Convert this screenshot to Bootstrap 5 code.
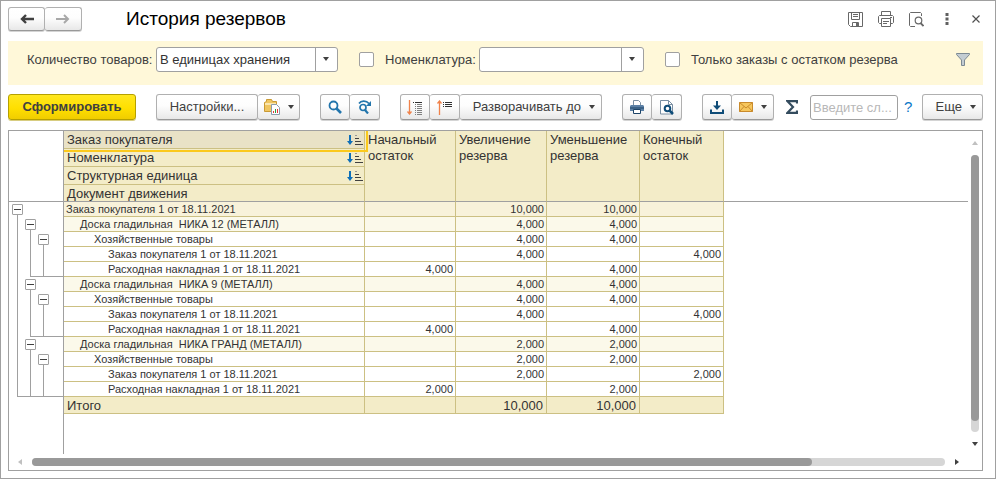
<!DOCTYPE html>
<html lang="ru">
<head>
<meta charset="utf-8">
<meta name="viewport" content="width=device-width, initial-scale=1">
<title>История резервов</title>
<link href="https://cdn.jsdelivr.net/npm/bootstrap@5.3.0/dist/css/bootstrap.min.css" rel="stylesheet">
<style>
body{font-family:"Liberation Sans",Arial,sans-serif;font-size:13px;line-height:16px;color:#404040;background:#fff}
.app-window{height:100vh;min-height:440px;border:1px solid #a0a0a0;padding:6px 12px 7px 7px}
svg{display:block;flex:none}
.page-title{font-size:19px;line-height:24px;color:#000;font-weight:400;margin-left:44px}
.win-tools{gap:15px;padding-right:3px}
.dots-btn{margin-left:6px}
.close-btn{margin-left:8px}
.tool{display:inline-flex;align-items:center;justify-content:center;height:26px;min-width:30px;padding:0 6px;border:1px solid #b0b0b0;border-bottom-color:#999;border-radius:3px;background:linear-gradient(#fff,#fdfdfd 45%,#e8e8e8);box-shadow:0 1px 0 #d4d4d4;color:#404040;font-size:13px;line-height:16px;flex:none}
.btn-group>.tool{flex:none}
.btn-group>.tool:not(:first-child){margin-left:0;border-left:0}
.nav-tool{height:24px;width:37px}
.tool-menu{width:42px}
.tool-main{width:128px;font-weight:700;background:linear-gradient(#ffe71f,#ffdf00 55%,#f0cd00);border-color:#b5a000;box-shadow:0 1px 0 #d8cd80}
.set-btn{width:102px}
.expand-btn{width:142px;justify-content:flex-end}
.more-btn{width:61px;justify-content:flex-end}
.caret{width:0;height:0;border:3px solid transparent;border-top:4px solid #404040;border-bottom:0}
.bare{border:0;background:none;padding:0;color:#404040}
.filter-bar{background:#fff8d9;height:44px;margin-top:10px;padding:6px 13px 13px 19px}
.lb-unit{width:129px}
.lb-item{width:94px}
.combo{height:25px;border:1px solid #a0a0a0;border-radius:3px;color:#333;padding:0 26px 0 3px;appearance:none;font-size:13px;background:url("data:image/svg+xml,%3Csvg xmlns='http://www.w3.org/2000/svg' width='22' height='23'%3E%3Cpath d='M.5 0v23' stroke='%23a0a0a0'/%3E%3Cpath d='M8 9h6l-3 4z' fill='%23404040'/%3E%3C/svg%3E") right center no-repeat #fff}
.combo-unit{width:182px}
.combo-item{width:165px}
.tick{appearance:none;width:15px;height:15px;border:1px solid #a0a0a0;border-radius:2px;background:#fff;margin:0 11px 0 21px}
.tick:checked{background:#777}
.toolbar{margin-top:9px;height:27px}
.toolbar>.tool-main,.toolbar>.btn-group{margin-right:20px}
.toolbar>.btn-group.send-group,.sum-btn{margin-right:12px}
.sum-btn,.help{height:26px;line-height:26px}
.search-text{height:25px;border:1px solid #a0a0a0;border-radius:3px;padding:0 2px;font-size:13px;min-width:0;width:60px;margin-top:1px}
.search-text::placeholder{color:#b8b8b8;opacity:1}
.help{color:#0b78c8;font-size:15px;text-decoration:none;width:24px;padding-left:6px}
.report{border:1px solid #a0a0a0;margin-top:9px;min-height:0}
.sheet{overflow:hidden;min-width:0}
.grid{width:100%;height:100%;table-layout:fixed;border-collapse:separate;border-spacing:0;color:#333}
.c-gut{width:55px}
.c-name{width:301px}
.c-a{width:91px}
.c-b{width:93px}
.c-c{width:84px}
.grid th{font-weight:400;background:#f3ecc8;border:0 solid #ccc083;border-width:0 1px 1px 0;padding:1px 1px 0 3px;vertical-align:top;height:18px;line-height:16px}
.grid th.last-row,.grid th[rowspan]{border-bottom-color:#a0a0a0}
.grid th.last-row{height:17px;line-height:15px}
.grid th.none{background:#fff;border-right-color:#a0a0a0}
.grid th.none:last-child{border-right:0}
.grid th.current{background:#e9e2c6;position:relative}
.current::after{content:"";position:absolute;left:0;top:0;right:-4px;bottom:-4px;border:solid #fbc91c;border-width:0 2px 2px 0}
.sort{margin-top:3px}
.grid td{border:0 solid #ccc083;border-width:0 1px 1px 0;height:15px;padding:0 2px;font-size:11px;line-height:14px;text-align:right;white-space:pre;overflow:hidden}
.grid td:last-child,.grid .rest td{border-width:0}
.grid td.gut,.grid .rest td.gut{border-width:0 1px 0 0;border-color:#a0a0a0;padding:0 0 0 8px;background:#fff!important}
.grid td:nth-child(2){text-align:left}
.lv0 td:not(:last-child){background:#f8f2da}
.lv1 td:not(:last-child){background:#fbf9ea}
.lv1 td:nth-child(2){padding-left:16px}
.lv2 td:nth-child(2){padding-left:30px}
.lv3 td:nth-child(2){padding-left:44px}
.grid .total td{background:#f3ecc8;height:17px;font-size:13px;line-height:15px;padding:1px 3px 0}
.grid .total td:last-child{background:none}
.grid .rest td{height:auto}
.tree{display:flex;height:15px}
.tree i{width:13px;border:0 solid #a0a0a0}
.tree i:last-child{flex:1}
.tree .ln{border-left-width:1px}
.tree .end{border-bottom-width:1px}
.tree .nd{background:linear-gradient(#a0a0a0,#a0a0a0) 0 100%/1px 50% no-repeat}
.fold{display:block;width:11px;height:11px;margin:2px 0 0 -5px;padding:0;border:1px solid #a0a0a0;border-radius:1px;background:linear-gradient(#404040,#404040) center/7px 1px no-repeat #fff}
.vbar{width:14px;padding:10px 3px 8px;gap:10px}
.hbar{height:16px;padding:0 23px 0 9px;gap:10px}
.track{background:#d6d6d6;border-radius:4px}
.thumb{background:#999;border-radius:4px}
.vbar .track,.vbar .thumb{width:8px}
.vbar .thumb{height:96%}
.hbar .track,.hbar .thumb{height:8px}
.hbar .thumb{width:85.4%}
</style>
<script src="https://cdn.jsdelivr.net/npm/bootstrap@5.3.0/dist/js/bootstrap.bundle.min.js"></script>
</head>
<body>
<main class="app-window d-flex flex-column">
  <header class="d-flex align-items-center">
    <div class="btn-group" role="group" aria-label="Навигация">
      <button class="tool nav-tool" type="button" aria-label="Назад"><svg width="14" height="10"><path d="M14 5H3M6 1L2 5l4 4" fill="none" stroke="#404040" stroke-width="2.4"/></svg></button>
      <button class="tool nav-tool" type="button" aria-label="Вперед"><svg width="14" height="10"><path d="M0 5h11M8 1l4 4-4 4" fill="none" stroke="#a8a8a8" stroke-width="2"/></svg></button>
    </div>
    <h1 class="page-title mb-0 me-auto">История резервов</h1>
    <div class="d-flex align-items-center win-tools">
      <button class="bare" type="button" aria-label="Сохранить"><svg width="15" height="15" fill="none" stroke="#686868"><path d="M.5.5h14v14H2.5l-2-2zM3.500.5v7h8v-7M5 2.500h5M5 4.500h5M4.500 14.500v-4h6v4"/><path d="M8 11h2v3H8z" fill="#686868" stroke="none"/></svg></button>
      <button class="bare" type="button" aria-label="Печать"><svg width="16" height="16" fill="none" stroke="#686868"><path d="M3.500 4V.5h9V4M3.500 12.500h-2l-1-1v-6l1-1h13l1 1v6l-1 1h-2M3.500 7.500h9v8h-9zM5 10.500h6M5 12.500h4M12 6.500h2"/></svg></button>
      <button class="bare" type="button" aria-label="Просмотр"><svg width="15" height="15" fill="none" stroke="#686868"><path d="M12.500 4V1.500l-1-1H1.500l-1 1v12l1 1H6"/><circle cx="9.500" cy="8.500" r="3.300" stroke-width="1.200"/><path d="M11.500 11l3 3" stroke-width="1.800"/></svg></button>
      <button class="bare dots-btn" type="button" aria-label="Ещё"><svg width="4" height="12" fill="#606060"><path d="M.5 0h3v3h-3zM.5 4.500h3v3h-3zM.5 9h3v3h-3z"/></svg></button>
      <button class="bare close-btn" type="button" aria-label="Закрыть"><svg width="8" height="8"><path d="M.5.5l7 7M7.500.5l-7 7" stroke="#505050" stroke-width="1.200"/></svg></button>
    </div>
  </header>

  <section class="filter-bar d-flex align-items-center">
    <label for="unit" class="lb-unit">Количество товаров:</label>
    <select id="unit" class="combo combo-unit"><option>В единицах хранения</option></select>
    <input id="useItem" type="checkbox" class="tick">
    <label for="useItem" class="lb-item">Номенклатура:</label>
    <select id="item" class="combo combo-item" aria-label="Номенклатура"><option></option></select>
    <input id="onlyRest" type="checkbox" class="tick">
    <label for="onlyRest">Только заказы с остатком резерва</label>
    <button class="bare ms-auto" type="button" aria-label="Фильтр"><svg width="14" height="13"><path d="M.5.5h13v1L8.500 7v5.500h-3V7L.5 1.500z" fill="#c3ccd2" stroke="#7d8a93"/></svg></button>
  </section>

  <div class="toolbar d-flex align-items-start" role="toolbar" aria-label="Команды отчета">
    <button class="tool tool-main" type="button">Сформировать</button>
    <div class="btn-group">
      <button class="tool set-btn" type="button">Настройки...</button>
      <button class="tool tool-menu gap-2" type="button" aria-label="Варианты настроек"><svg width="16" height="16"><path d="M.5 12.500v-9l2-1V.5h5l1 2h4v10z" fill="#f0c661" stroke="#c99a35"/><path d="M1 5h11" stroke="#fae6ae" stroke-width="2"/><path d="M7.500 5.500h5l3 3v7h-8z" fill="#fff" stroke="#8a9cac"/><path d="M9.500 14v-2M13.500 14v-4" stroke="#e33"/><path d="M11.500 14v-4" stroke="#2a9c3c"/></svg><span class="caret"></span></button>
    </div>
    <div class="btn-group">
      <button class="tool" type="button" aria-label="Найти"><svg width="14" height="14" fill="none" stroke="#2275ac"><circle cx="5.500" cy="5.500" r="4" stroke-width="1.800"/><path d="M8.500 8.500l4.500 4.500" stroke-width="2.600"/></svg></button>
      <button class="tool" type="button" aria-label="Найти далее"><svg width="14" height="14" fill="none" stroke="#2275ac"><circle cx="5" cy="7.500" r="3" stroke-width="1.700"/><path d="M7 10l3 3.500" stroke-width="2.200"/><path d="M1 3.500C3 .5 8 0 11 3.500" stroke-width="1.700"/><path d="M13 1v5H8z" fill="#2275ac" stroke="none"/></svg></button>
    </div>
    <div class="btn-group">
      <button class="tool" type="button" aria-label="Развернуть"><svg width="16" height="15"><path d="M2.500 0v14M.5 11.500l2 2.500 2-2.500" fill="none" stroke="#f0824a" stroke-width="1.300"/><path d="M6 2.500h9" stroke="#303030" stroke-dasharray="1 1 14"/><path d="M8 4.500h7M8 6.500h7M8 8.500h7M8 10.500h7M8 12.500h7M8 14.500h7" stroke="#808080" stroke-dasharray="1 1 14"/></svg></button>
      <button class="tool" type="button" aria-label="Свернуть"><svg width="16" height="15"><path d="M2.500 15V1M.5 3.500L2.500 1l2 2.500" fill="none" stroke="#f0824a" stroke-width="1.300"/><path d="M6 2.500h9M6 4.500h9M6 6.500h9" stroke="#303030" stroke-dasharray="1 1 14"/></svg></button>
      <button class="tool expand-btn gap-2" type="button">Разворачивать до<span class="caret"></span></button>
    </div>
    <div class="btn-group">
      <button class="tool" type="button" aria-label="Печать"><svg width="14" height="14"><path d="M3.500 6V.5h5l2 2V6" fill="#fff" stroke="#7a8fa3"/><path d="M1 5h12l1 1v5H0V6z" fill="#5b80a6"/><path d="M0 8h14" stroke="#1d4468"/><path d="M3.500 9.500h7v4h-7z" fill="#fff" stroke="#1d4468"/></svg></button>
      <button class="tool" type="button" aria-label="Просмотр"><svg width="14" height="15"><path d="M.5.5h8l4 4v9.500H.5z" fill="#fff" stroke="#7a8fa3"/><path d="M8.500.5v4h4" fill="none" stroke="#7a8fa3"/><circle cx="7.500" cy="8.500" r="2.800" fill="#fff" stroke="#0f4c78" stroke-width="2"/><path d="M9.500 10.500l3.500 3.500" stroke="#0f4c78" stroke-width="2.500"/></svg></button>
    </div>
    <div class="btn-group send-group">
      <button class="tool" type="button" aria-label="Сохранить"><svg width="14" height="13"><path d="M7 0v7" stroke="#0f4c78" stroke-width="2"/><path d="M3 4.500h8L7 9z" fill="#0f4c78"/><path d="M1 8.500V12h12V8.500" fill="none" stroke="#0f4c78" stroke-width="2"/></svg></button>
      <button class="tool tool-menu gap-2" type="button" aria-label="Отправить"><svg width="14" height="10"><path d="M.5.5h13v9H.5z" fill="#f6c65c" stroke="#c98a2b"/><path d="M.5.5L7 6 13.500.5M.5 9.500l4.500-5M13.500 9.500L9 4.500" fill="none" stroke="#c98a2b"/></svg><span class="caret"></span></button>
    </div>
    <button class="bare sum-btn d-flex align-items-center" type="button" aria-label="Сумма"><svg width="12" height="14"><path d="M11 3.500V1.200H1.500L7 7l-5.500 5.800H11V10.500" fill="none" stroke="#344c5e" stroke-width="2.200"/></svg></button>
    <input class="search-text flex-grow-1" type="text" placeholder="Введите сл..." aria-label="Поиск">
    <a class="help" href="#" aria-label="Справка">?</a>
    <button class="tool more-btn gap-2" type="button">Еще<span class="caret"></span></button>
  </div>

  <section class="report d-flex flex-column flex-grow-1">
    <div class="d-flex flex-grow-1">
      <div class="sheet flex-grow-1">
        <table class="grid">
          <colgroup><col class="c-gut"><col class="c-name"><col class="c-a"><col class="c-a"><col class="c-b"><col class="c-c"><col></colgroup>
          <thead>
            <tr><th class="none" rowspan="4"></th><th class="current"><span class="d-flex justify-content-between">Заказ покупателя<svg class="sort" width="16" height="11"><use href="#sort"/></svg></span></th><th rowspan="4">Начальный остаток</th><th rowspan="4">Увеличение резерва</th><th rowspan="4">Уменьшение резерва</th><th rowspan="4">Конечный остаток</th><th class="none" rowspan="4"></th></tr>
            <tr><th><span class="d-flex justify-content-between">Номенклатура<svg class="sort" width="16" height="11"><use href="#sort"/></svg></span></th></tr>
            <tr><th><span class="d-flex justify-content-between">Структурная единица<svg class="sort" width="16" height="11"><use href="#sort"/></svg></span></th></tr>
            <tr><th class="last-row">Документ движения</th></tr>
          </thead>
          <tbody>
            <tr class="lv0"><td class="gut"><div class="tree"><i class="nd"><button class="fold" aria-label="Свернуть"></button></i><i></i><i></i></div></td><td>Заказ покупателя 1 от 18.11.2021</td><td></td><td>10,000</td><td>10,000</td><td></td><td></td></tr>
            <tr class="lv1"><td class="gut"><div class="tree"><i class="ln"></i><i class="nd"><button class="fold" aria-label="Свернуть"></button></i><i></i></div></td><td>Доска гладильная  НИКА 12 (МЕТАЛЛ)</td><td></td><td>4,000</td><td>4,000</td><td></td><td></td></tr>
            <tr class="lv2"><td class="gut"><div class="tree"><i class="ln"></i><i class="ln"></i><i class="nd"><button class="fold" aria-label="Свернуть"></button></i></div></td><td>Хозяйственные товары</td><td></td><td>4,000</td><td>4,000</td><td></td><td></td></tr>
            <tr class="lv3"><td class="gut"><div class="tree"><i class="ln"></i><i class="ln"></i><i class="ln"></i></div></td><td>Заказ покупателя 1 от 18.11.2021</td><td></td><td>4,000</td><td></td><td>4,000</td><td></td></tr>
            <tr class="lv3"><td class="gut"><div class="tree"><i class="ln"></i><i class="ln end"></i><i class="ln end"></i></div></td><td>Расходная накладная 1 от 18.11.2021</td><td>4,000</td><td></td><td>4,000</td><td></td><td></td></tr>
            <tr class="lv1"><td class="gut"><div class="tree"><i class="ln"></i><i class="nd"><button class="fold" aria-label="Свернуть"></button></i><i></i></div></td><td>Доска гладильная  НИКА 9 (МЕТАЛЛ)</td><td></td><td>4,000</td><td>4,000</td><td></td><td></td></tr>
            <tr class="lv2"><td class="gut"><div class="tree"><i class="ln"></i><i class="ln"></i><i class="nd"><button class="fold" aria-label="Свернуть"></button></i></div></td><td>Хозяйственные товары</td><td></td><td>4,000</td><td>4,000</td><td></td><td></td></tr>
            <tr class="lv3"><td class="gut"><div class="tree"><i class="ln"></i><i class="ln"></i><i class="ln"></i></div></td><td>Заказ покупателя 1 от 18.11.2021</td><td></td><td>4,000</td><td></td><td>4,000</td><td></td></tr>
            <tr class="lv3"><td class="gut"><div class="tree"><i class="ln"></i><i class="ln end"></i><i class="ln end"></i></div></td><td>Расходная накладная 1 от 18.11.2021</td><td>4,000</td><td></td><td>4,000</td><td></td><td></td></tr>
            <tr class="lv1"><td class="gut"><div class="tree"><i class="ln"></i><i class="nd"><button class="fold" aria-label="Свернуть"></button></i><i></i></div></td><td>Доска гладильная  НИКА ГРАНД (МЕТАЛЛ)</td><td></td><td>2,000</td><td>2,000</td><td></td><td></td></tr>
            <tr class="lv2"><td class="gut"><div class="tree"><i class="ln"></i><i class="ln"></i><i class="nd"><button class="fold" aria-label="Свернуть"></button></i></div></td><td>Хозяйственные товары</td><td></td><td>2,000</td><td>2,000</td><td></td><td></td></tr>
            <tr class="lv3"><td class="gut"><div class="tree"><i class="ln"></i><i class="ln"></i><i class="ln"></i></div></td><td>Заказ покупателя 1 от 18.11.2021</td><td></td><td>2,000</td><td></td><td>2,000</td><td></td></tr>
            <tr class="lv3"><td class="gut"><div class="tree"><i class="ln end"></i><i class="ln end"></i><i class="ln end"></i></div></td><td>Расходная накладная 1 от 18.11.2021</td><td>2,000</td><td></td><td>2,000</td><td></td><td></td></tr>
            <tr class="total"><td class="gut"></td><td>Итого</td><td></td><td>10,000</td><td>10,000</td><td></td><td></td></tr>
            <tr class="rest"><td class="gut"></td><td colspan="6"></td></tr>
          </tbody>
        </table>
      </div>
      <div class="vbar d-flex flex-column align-items-center">
        <svg width="6" height="4"><path d="M3 0l3 4H0z" fill="#c0c0c0"/></svg>
        <div class="track flex-grow-1"><div class="thumb"></div></div>
        <svg width="6" height="4"><path d="M3 4l3-4H0z" fill="#404040"/></svg>
      </div>
    </div>
    <div class="hbar d-flex align-items-center">
      <svg width="4" height="6"><path d="M0 3l4-3v6z" fill="#c0c0c0"/></svg>
      <div class="track flex-grow-1"><div class="thumb"></div></div>
      <svg width="4" height="6"><path d="M4 3L0 0v6z" fill="#404040"/></svg>
    </div>
  </section>
</main>
<svg width="0" height="0" class="position-absolute"><defs><g id="sort"><path d="M3 0v7" stroke="#0e6fb8" stroke-width="2"/><path d="M0 6h6L3 10z" fill="#0e6fb8"/><path d="M8 .5h2" stroke="#999"/><path d="M8 3.500h4M8 6.500h6M8 9.500h8" stroke="#404040"/></g></defs></svg>
</body>
</html>
